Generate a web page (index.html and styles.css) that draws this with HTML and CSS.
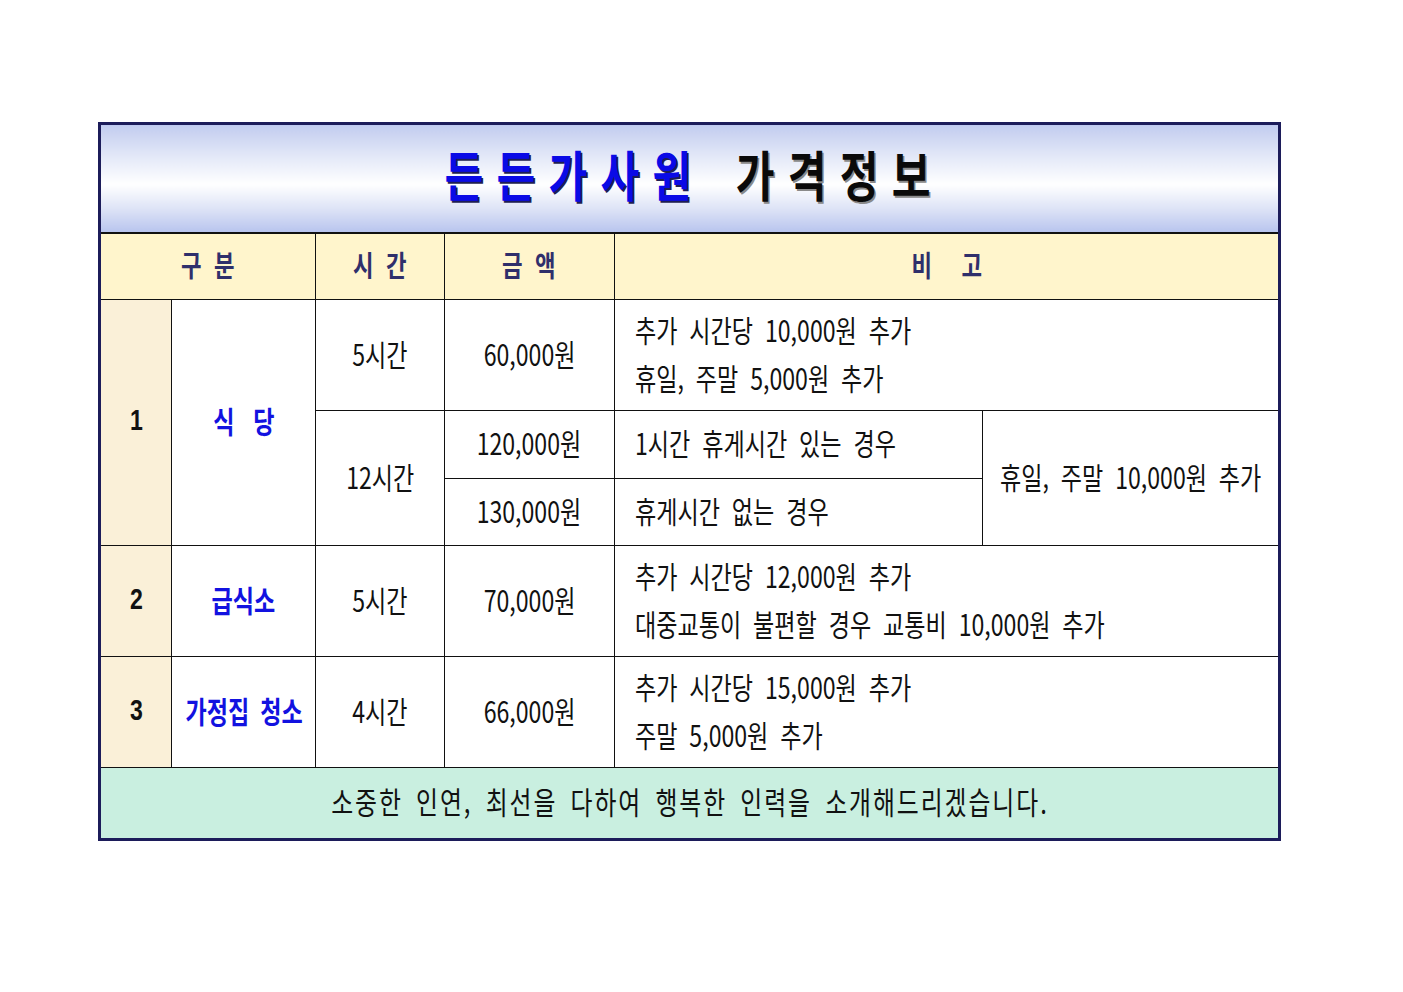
FILE: index.html
```html
<!DOCTYPE html>
<html lang="ko">
<head>
<meta charset="utf-8">
<title>든든가사원 가격정보</title>
<link rel="stylesheet" href="styles.css">
</head>
<body>
<div class="page">
  <table class="price">
    <colgroup>
      <col class="c-num"><col class="c-name"><col class="c-time"><col class="c-amt"><col class="c-note"><col class="c-note2">
    </colgroup>
    <tr class="r-title">
      <th colspan="6" class="title"><span class="tt"><span class="blue">든든가사원</span><span class="gap"></span><span class="black">가격정보</span></span></th>
    </tr>
    <tr class="r-head">
      <th colspan="2" class="head"><span class="sx">구 분</span></th>
      <th class="head"><span class="sx">시 간</span></th>
      <th class="head"><span class="sx">금 액</span></th>
      <th colspan="2" class="head"><span class="sx wide">비 고</span></th>
    </tr>
    <tr class="r-big">
      <td rowspan="3" class="num"><span class="sx">1</span></td>
      <td rowspan="3" class="name"><span class="sx wide">식 당</span></td>
      <td><span class="sx">5시간</span></td>
      <td><span class="sx">60,000원</span></td>
      <td colspan="2" class="note"><span class="sxl">추가 시간당 10,000원 추가<br>휴일, 주말 5,000원 추가</span></td>
    </tr>
    <tr class="r-small">
      <td rowspan="2"><span class="sx">12시간</span></td>
      <td><span class="sx">120,000원</span></td>
      <td class="note"><span class="sxl">1시간 휴게시간 있는 경우</span></td>
      <td rowspan="2"><span class="sx">휴일, 주말 10,000원 추가</span></td>
    </tr>
    <tr class="r-small2">
      <td><span class="sx">130,000원</span></td>
      <td class="note"><span class="sxl">휴게시간 없는 경우</span></td>
    </tr>
    <tr class="r-big">
      <td class="num"><span class="sx">2</span></td>
      <td class="name"><span class="sx">급식소</span></td>
      <td><span class="sx">5시간</span></td>
      <td><span class="sx">70,000원</span></td>
      <td colspan="2" class="note"><span class="sxl">추가 시간당 12,000원 추가<br>대중교통이 불편할 경우 교통비 10,000원 추가</span></td>
    </tr>
    <tr class="r-big">
      <td class="num"><span class="sx">3</span></td>
      <td class="name"><span class="sx">가정집 청소</span></td>
      <td><span class="sx">4시간</span></td>
      <td><span class="sx">66,000원</span></td>
      <td colspan="2" class="note"><span class="sxl">추가 시간당 15,000원 추가<br>주말 5,000원 추가</span></td>
    </tr>
    <tr class="r-foot">
      <td colspan="6" class="foot"><span class="sx">소중한 인연, 최선을 다하여 행복한 인력을 소개해드리겠습니다.</span></td>
    </tr>
  </table>
</div>
</body>
</html>
```
FILE: styles.css
```css
html, body {
  margin: 0;
  padding: 0;
  background: #ffffff;
}
body {
  font-family: "Noto Sans CJK KR", "Noto Sans", sans-serif;
  color: #111111;
}
.page {
  padding: 122px 0 0 98px;
}
.price {
  border-collapse: collapse;
  table-layout: fixed;
  width: 1183px;
  border: 3px solid #1c1c5a;
}
.c-num { width: 72px; }
.c-name { width: 144px; }
.c-time { width: 128px; }
.c-amt { width: 170px; }
.c-note { width: 368px; }
.c-note2 { width: 296px; }

.price th, .price td {
  border: 1px solid #111111;
  padding: 0 0 5px 0;
  text-align: center;
  vertical-align: middle;
  white-space: nowrap;
  font-size: 30px;
  font-weight: 400;
  line-height: 48px;
  overflow: visible;
}
.sx {
  display: inline-block;
  transform: scaleX(0.77);
  transform-origin: center;
  word-spacing: 7px;
  margin: 0 -120px;
}
.sxl {
  display: inline-block;
  transform: scaleX(0.77);
  transform-origin: left center;
  text-align: left;
  word-spacing: 7px;
}

/* title */
.price .r-title th {
  height: 102px;
  border-bottom: 2px solid #111111;
  background: linear-gradient(to bottom, #c2ccef 0%, #e4e9f8 30%, #ffffff 55%, #dde3f6 78%, #b8c4ee 100%);
}
.tt {
  display: inline-block;
  font-size: 54px;
  font-weight: 700;
  letter-spacing: 17px;
  line-height: 60px;
  transform: scaleX(0.78);
  transform-origin: center;
  margin: 0 -120px 0 -110px;
}
.blue {
  color: #0a0ae6;
  text-shadow: 2px 2px 0 #1e1e55;
}
.black {
  color: #0a0a0a;
  text-shadow: 2px 2px 0 #8a8a8a;
}
.gap {
  display: inline-block;
  width: 40px;
}

/* header */
.price .r-head th {
  height: 60px;
  background: #fff5cc;
  color: #2f2f6b;
  font-weight: 700;
  font-size: 29px;
}
.price .r-head .sx {
  word-spacing: 8px;
}
.price .r-head .wide {
  word-spacing: 30px;
}

.price .r-big td { height: 105px; }
.price .r-small td { height: 62px; }
.price .r-small2 td { height: 61px; }

.price .num {
  background: #faf0d8;
  font-family: "Liberation Sans", Arial, sans-serif;
  font-weight: 700;
  font-size: 30px;
  color: #111111;
}
.price .name {
  color: #1212e0;
  font-weight: 700;
  font-size: 30px;
}
.price .name .sx {
  word-spacing: 6px;
}
.price .name .wide {
  word-spacing: 16px;
}
.price .note {
  text-align: left;
  padding-left: 20px;
}

.price .r-foot td {
  height: 65px;
  background: #c9efe0;
  font-size: 31px;
}
.price .foot .sx {
  letter-spacing: 2.5px;
  word-spacing: 6px;
}
```
